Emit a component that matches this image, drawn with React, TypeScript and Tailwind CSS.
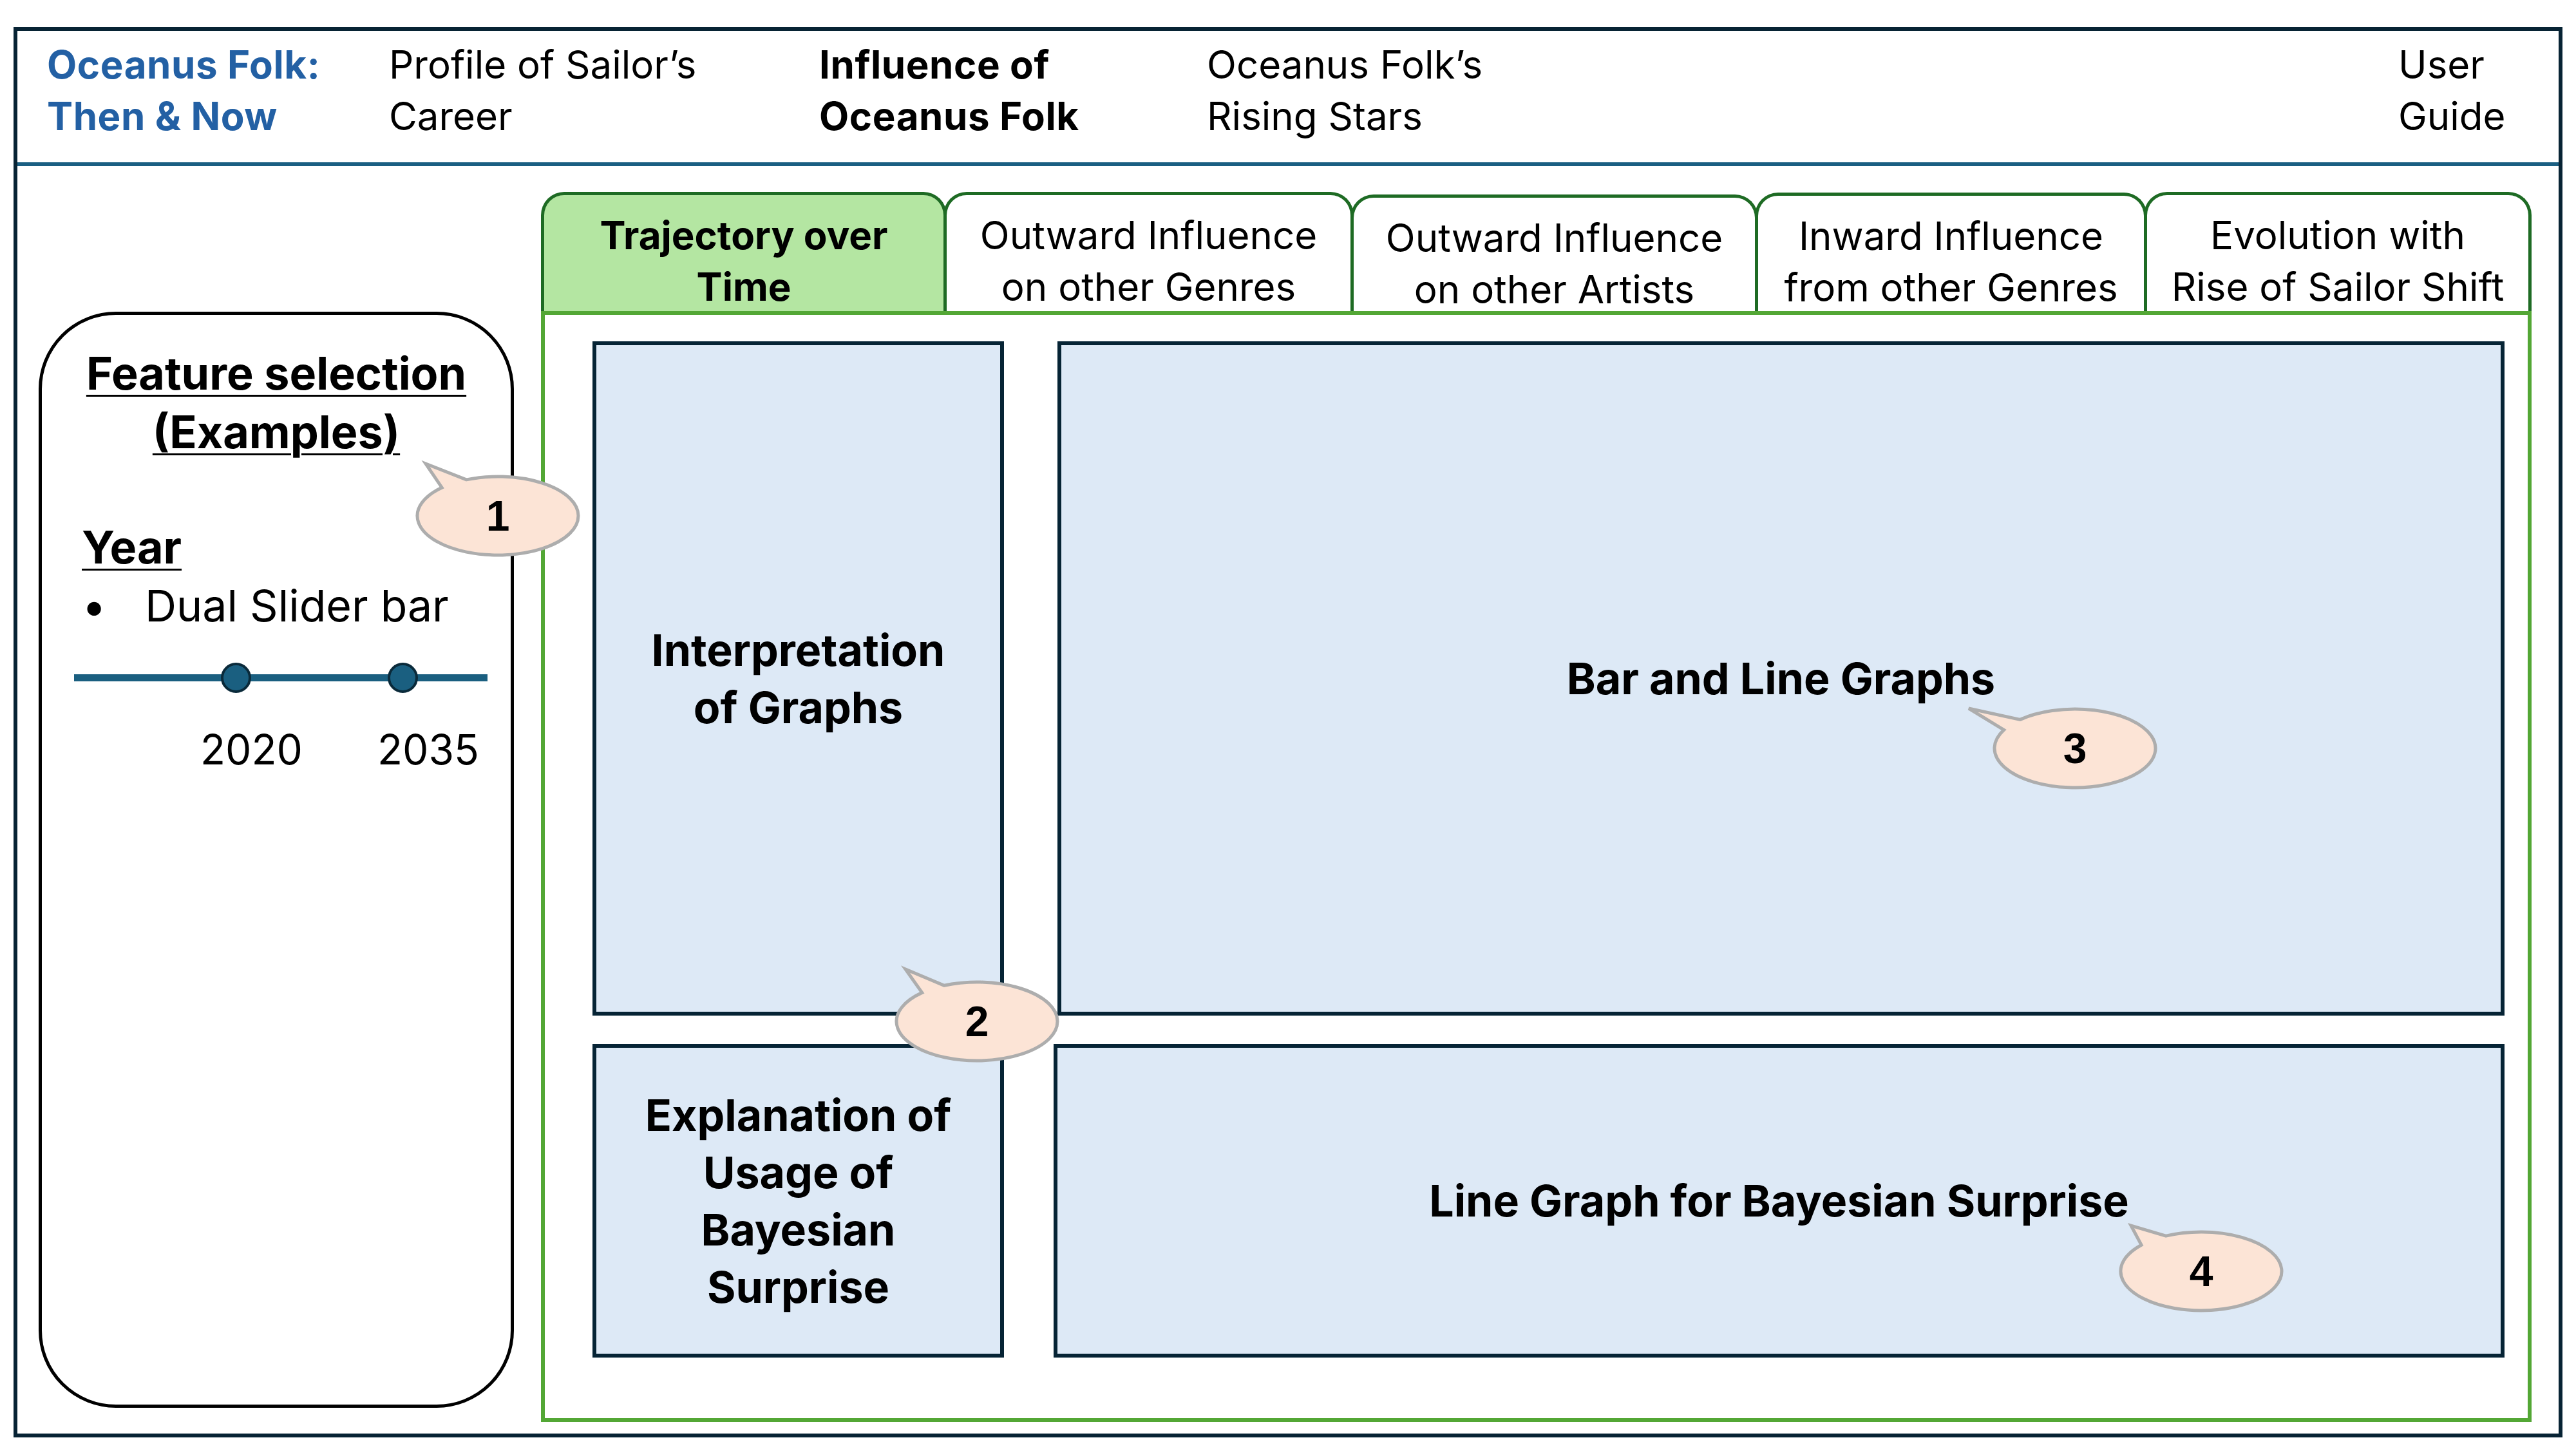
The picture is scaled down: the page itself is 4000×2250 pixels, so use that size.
import { FC } from 'react';

interface BubbleProps {
  pos: string;
  label: string;
  tip: [number, number];
  a1: number;
  a2: number;
}

const BW = 256;
const BH = 128;

// speech bubble with tail, drawn as one outline
const Bubble: FC<BubbleProps> = ({ pos, label, tip, a1, a2 }) => {
  const cx = BW / 2;
  const cy = BH / 2;
  const rx = cx - 3;
  const ry = cy - 3;
  const pt = (a: number) => [cx + rx * Math.cos((a * Math.PI) / 180), cy + ry * Math.sin((a * Math.PI) / 180)];
  const [ax, ay] = pt(a1);
  const [bx, by] = pt(a2);
  const d = `M ${bx} ${by} A ${rx} ${ry} 0 1 1 ${ax} ${ay} L ${cx + tip[0]} ${cy + tip[1]} Z`;
  return (
    <div className={`absolute w-[256px] h-[128px] ${pos}`}>
      <svg width={BW} height={BH} className="overflow-visible absolute inset-0">
        <path d={d} fill="#fce4d6" stroke="#adadad" strokeWidth={5} strokeLinejoin="miter" />
      </svg>
      <span className="absolute inset-0 flex items-center justify-center font-['Liberation_Sans',Arial,sans-serif] font-bold text-[66px] leading-none text-black">
        {label}
      </span>
    </div>
  );
};

const tabs = [
  { lines: ['Trajectory over', 'Time'], w: 'w-[630px] h-[185px]', active: true },
  { lines: ['Outward Influence', 'on other Genres'], w: 'w-[637px] h-[185px]', active: false },
  { lines: ['Outward Influence', 'on other Artists'], w: 'w-[633px] h-[181px]', active: false },
  { lines: ['Inward Influence', 'from other Genres'], w: 'w-[609px] h-[184px]', active: false },
  { lines: ['Evolution with', 'Rise of Sailor Shift'], w: 'w-[602px] h-[185px]', active: false },
];

const boxCls =
  'flex items-center justify-center text-center bg-[#dde9f6] border-[6px] border-[#062435] font-bold text-[68px] leading-[89px] text-black';

const App: FC = () => {
  return (
    <div className="relative w-[4000px] h-[2250px] bg-white pt-[42px] pl-[21px] font-['Inter',sans-serif] text-black">
      <div className="w-[3958px] h-[2190px] border-[6px] border-[#072334]">
        {/* top nav */}
        <div className="h-[210px] border-b-[6px] border-[#1a5f82] flex items-start pt-[12px] pl-[46px] text-[60px] leading-[80px]">
          <div className="w-[531px] font-bold text-[#2360a4] tracking-[0.01em]">
            <p>Oceanus Folk:</p>
            <p>Then &amp; Now</p>
          </div>
          <div className="w-[668px]">
            <p>Profile of Sailor’s</p>
            <p>Career</p>
          </div>
          <div className="w-[602px] font-bold tracking-[0.01em]">
            <p>Influence of</p>
            <p>Oceanus Folk</p>
          </div>
          <div className="w-[1850px]">
            <p>Oceanus Folk’s</p>
            <p>Rising Stars</p>
          </div>
          <div>
            <p>User</p>
            <p>Guide</p>
          </div>
        </div>

        <div className="flex items-start pl-[33px] pt-[40px]">
          {/* feature panel */}
          <div className="mt-[186px] w-[738px] h-[1702px] rounded-[120px] border-[5px] border-black pt-[45px]">
            <div className="text-center font-bold text-[70px] leading-[91px] underline decoration-[3px] underline-offset-[8px]">
              <p>Feature selection</p>
              <p>(Examples)</p>
            </div>
            <div className="mt-[92px] pl-[62px]">
              <p className="font-bold text-[70px] leading-[84px] underline decoration-[3px] underline-offset-[8px]">Year</p>
              <div className="mt-[8px] flex text-[68px] leading-[80px]">
                <span className="w-[98px]">•</span>
                <span>Dual Slider bar</span>
              </div>
            </div>
            <div className="relative mt-[49px] ml-[50px] w-[642px] h-[47px]">
              <div className="absolute left-0 right-0 top-[18px] h-[11px] bg-[#1a5f80]" />
              <div className="absolute left-[228px] top-0 w-[47px] h-[47px] rounded-full bg-[#1a5f80] border-[4px] border-[#0a2a3a]" />
              <div className="absolute left-[487px] top-0 w-[47px] h-[47px] rounded-full bg-[#1a5f80] border-[4px] border-[#0a2a3a]" />
            </div>
            <div className="mt-[50px] pl-[246px] flex text-[64px] leading-[76px]">
              <span className="w-[275px]">2020</span>
              <span>2035</span>
            </div>
          </div>

          {/* main tabs area */}
          <div className="ml-[42px] w-[3091px]">
            <div className="flex items-end h-[185px]">
              {tabs.map((t, i) => (
                <div
                  key={i}
                  className={`${t.w} ${i > 0 ? '-ml-[5px]' : ''} ${
                    t.active ? 'bg-[#b4e6a2] font-bold' : 'bg-white'
                  } rounded-t-[36px] border-[5px] border-b-0 border-[#1e6b24] pt-[22px] text-center text-[60px] leading-[80px]`}
                >
                  {t.lines.map((l) => (
                    <p key={l} className="whitespace-nowrap">
                      {l}
                    </p>
                  ))}
                </div>
              ))}
            </div>
            <div className="h-[1725px] border-[6px] border-[#53a735] pl-[74px] pt-[41px]">
              <div className="flex h-[1047px]">
                <div className={`${boxCls} w-[639px]`}>
                  <p>
                    Interpretation
                    <br />
                    of Graphs
                  </p>
                </div>
                <div className={`${boxCls} ml-[83px] w-[2247px]`}>
                  <p>Bar and Line Graphs</p>
                </div>
              </div>
              <div className="flex h-[487px] mt-[44px]">
                <div className={`${boxCls} w-[639px]`}>
                  <p>
                    Explanation of
                    <br />
                    Usage of
                    <br />
                    Bayesian
                    <br />
                    Surprise
                  </p>
                </div>
                <div className={`${boxCls} ml-[77px] w-[2253px]`}>
                  <p>Line Graph for Bayesian Surprise</p>
                </div>
              </div>
            </div>
          </div>
        </div>
      </div>

      <Bubble pos="left-[645px] top-[737px]" label="1" tip={[-112, -81]} a1={-134} a2={-113} />
      <Bubble pos="left-[1389px] top-[1522px]" label="2" tip={[-111, -81]} a1={-133} a2={-114} />
      <Bubble pos="left-[3094px] top-[1098px]" label="3" tip={[-165, -62]} a1={-152} a2={-133} />
      <Bubble pos="left-[3290px] top-[1910px]" label="4" tip={[-109, -71]} a1={-138} a2={-116} />
    </div>
  );
};

export default App;
